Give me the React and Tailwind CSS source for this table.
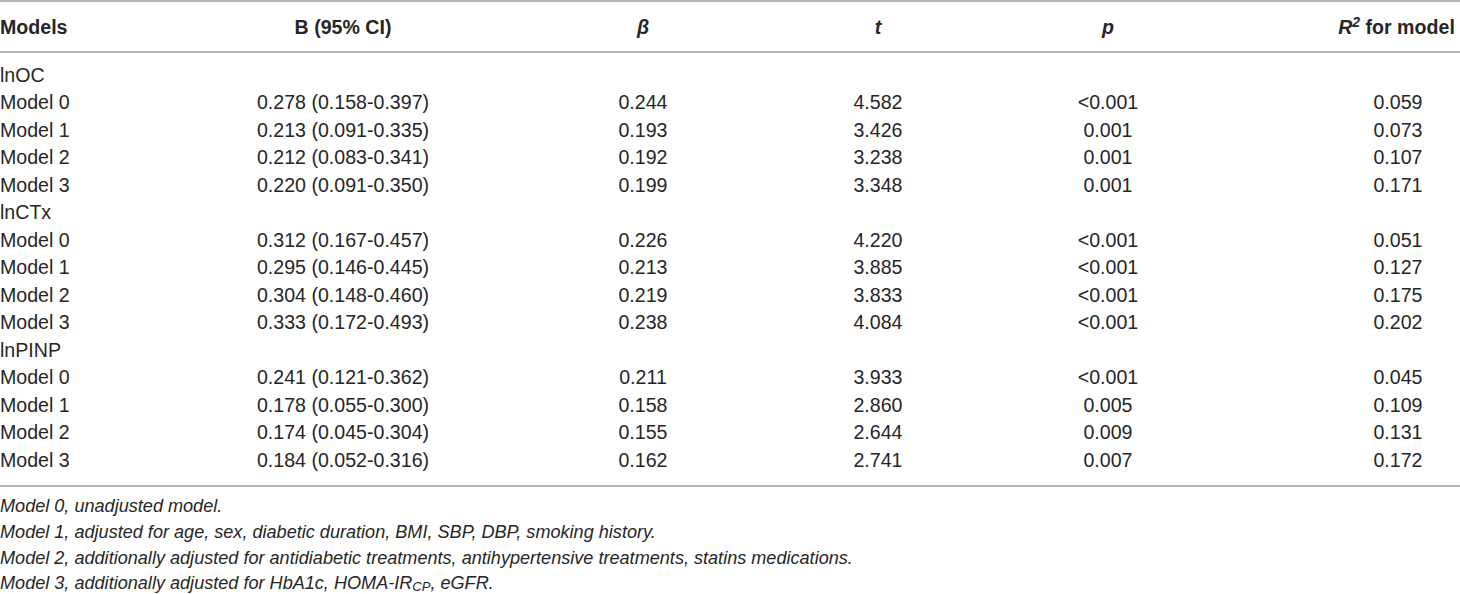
import React from "react";

const groups = [
  {
    name: "lnOC",
    rows: [
      ["Model 0", "0.278 (0.158-0.397)", "0.244", "4.582", "<0.001", "0.059"],
      ["Model 1", "0.213 (0.091-0.335)", "0.193", "3.426", "0.001", "0.073"],
      ["Model 2", "0.212 (0.083-0.341)", "0.192", "3.238", "0.001", "0.107"],
      ["Model 3", "0.220 (0.091-0.350)", "0.199", "3.348", "0.001", "0.171"],
    ],
  },
  {
    name: "lnCTx",
    rows: [
      ["Model 0", "0.312 (0.167-0.457)", "0.226", "4.220", "<0.001", "0.051"],
      ["Model 1", "0.295 (0.146-0.445)", "0.213", "3.885", "<0.001", "0.127"],
      ["Model 2", "0.304 (0.148-0.460)", "0.219", "3.833", "<0.001", "0.175"],
      ["Model 3", "0.333 (0.172-0.493)", "0.238", "4.084", "<0.001", "0.202"],
    ],
  },
  {
    name: "lnPINP",
    rows: [
      ["Model 0", "0.241 (0.121-0.362)", "0.211", "3.933", "<0.001", "0.045"],
      ["Model 1", "0.178 (0.055-0.300)", "0.158", "2.860", "0.005", "0.109"],
      ["Model 2", "0.174 (0.045-0.304)", "0.155", "2.644", "0.009", "0.131"],
      ["Model 3", "0.184 (0.052-0.316)", "0.162", "2.741", "0.007", "0.172"],
    ],
  },
];

const gridCols = "grid grid-cols-[193px_300px_300px_170px_290px_207px]";

const Row = ({ cells }) => (
  <div className={`${gridCols} h-[27.5px] items-center`}>
    <div className="text-left">{cells[0]}</div>
    <div className="text-center">{cells[1]}</div>
    <div className="text-center">{cells[2]}</div>
    <div className="text-center">{cells[3]}</div>
    <div className="text-center">{cells[4]}</div>
    <div className="text-center pl-[83px]">{cells[5]}</div>
  </div>
);

export default function App() {
  return (
    <div className="w-[1460px] h-[594px] bg-white text-[#262626] font-['Liberation_Sans',Arial,sans-serif] text-[19.6px] leading-none">
      {/* header */}
      <div
        className={`${gridCols} h-[53px] pt-[2px] items-center border-t-2 border-b-2 border-[#b5b5b5] font-bold`}
      >
        <div className="text-left">Models</div>
        <div className="text-center">B (95% CI)</div>
        <div className="text-center italic">β</div>
        <div className="text-center italic">t</div>
        <div className="text-center italic">p</div>
        <div className="text-center pl-[80px] whitespace-nowrap">
          <span className="italic">
            R<sup className="text-[14px] relative -top-[7px]">2</sup>
          </span>{" "}
          for model
        </div>
      </div>

      {/* body */}
      <div className="pt-[9px] pb-[10px] border-b-2 border-[#b5b5b5]">
        {groups.map((g) => (
          <React.Fragment key={g.name}>
            <Row cells={[g.name, "", "", "", "", ""]} />
            {g.rows.map((r, i) => (
              <Row key={g.name + i} cells={r} />
            ))}
          </React.Fragment>
        ))}
      </div>

      {/* footnotes */}
      <div className="pt-[7px] italic text-[18.1px]">
        <p className="h-[25.7px] flex items-center">Model 0, unadjusted model.</p>
        <p className="h-[25.7px] flex items-center">
          Model 1, adjusted for age, sex, diabetic duration, BMI, SBP, DBP, smoking history.
        </p>
        <p className="h-[25.7px] flex items-center">
          Model 2, additionally adjusted for antidiabetic treatments, antihypertensive treatments, statins medications.
        </p>
        <p className="h-[25.7px] flex items-center">
          Model 3, additionally adjusted for HbA1c, HOMA-IR
          <sub className="text-[13px] relative top-[4px]">CP</sub>, eGFR.
        </p>
      </div>
    </div>
  );
}
